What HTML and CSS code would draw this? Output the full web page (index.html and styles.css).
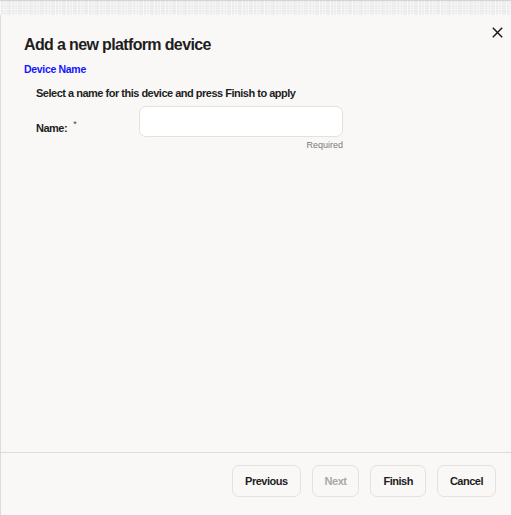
FILE: index.html
```html
<!DOCTYPE html>
<html lang="en">
<head>
<meta charset="utf-8">
<title>Add a new platform device</title>
<link rel="stylesheet" href="styles.css">
</head>
<body>
<div class="backdrop"></div>
<div class="dialog">
  <div class="dialog-body">
    <div class="header">
      <h1 class="title">Add a new platform device</h1>
      <button class="close" aria-label="Close">
        <svg width="11" height="11" viewBox="0 0 11 11"><path d="M0.8 0.8 L10.2 10.2 M10.2 0.8 L0.8 10.2" stroke="#1c1c1c" stroke-width="1.5" fill="none"/></svg>
      </button>
    </div>
    <div class="step">Device Name</div>
    <div class="section">
      <p class="instructions">Select a name for this device and press Finish to apply</p>
      <div class="form-row">
        <label class="label" for="name">Name:<span class="req">*</span></label>
        <div class="field">
          <input id="name" class="input" type="text">
          <div class="hint">Required</div>
        </div>
      </div>
    </div>
  </div>
  <div class="footer">
    <button class="btn">Previous</button>
    <button class="btn disabled">Next</button>
    <button class="btn">Finish</button>
    <button class="btn">Cancel</button>
  </div>
</div>
</body>
</html>
```
FILE: styles.css
```css
html, body {
  margin: 0;
  padding: 0;
  height: 515px;
  overflow: hidden;
}
body {
  background: #f9f8f7;
  font-family: "Liberation Sans", Arial, sans-serif;
  color: #1f1f1f;
}
.backdrop {
  height: 15px;
  background-color: #ebebeb;
  background-image:
    repeating-linear-gradient(90deg, rgba(255,255,255,0.6) 0 1px, transparent 1px 3px, rgba(255,255,255,0.3) 3px 5px, transparent 5px 6px, rgba(255,255,255,0.5) 6px 7px, transparent 7px 11px),
    repeating-linear-gradient(0deg, rgba(255,255,255,0.35) 0 1px, transparent 1px 2px, rgba(255,255,255,0.2) 2px 3px, transparent 3px 5px);
  border-top: 1px solid #d4d4d4;
  box-sizing: border-box;
}
.dialog {
  height: 500px;
  box-sizing: border-box;
  border-left: 1px solid #dcdcdc;
  background: #f9f8f7;
  display: flex;
  flex-direction: column;
}
.dialog-body {
  flex: 1;
  padding: 12px 8px 0 23px;
}
.header {
  display: flex;
  justify-content: space-between;
  align-items: flex-start;
}
.title {
  margin: 8px 0 0 0;
  font-size: 16px;
  line-height: 20px;
  font-weight: bold;
  letter-spacing: -0.04em;
  color: #1e1e1e;
}
.close {
  border: 0;
  padding: 0;
  background: transparent;
  width: 11px;
  height: 11px;
  display: block;
}
.close svg { display: block; }
.step {
  margin-top: 8px;
  font-size: 10.5px;
  line-height: 13px;
  font-weight: bold;
  letter-spacing: -0.03em;
  color: #1414ff;
}
.section {
  padding-left: 12px;
}
.instructions {
  margin: 10px 0 0 0;
  font-size: 11px;
  line-height: 14px;
  font-weight: bold;
  letter-spacing: -0.045em;
  color: #1e1e1e;
}
.form-row {
  margin-top: 6px;
  display: grid;
  grid-template-columns: 103px 204px;
}
.label {
  padding-top: 14.5px;
  font-size: 11px;
  line-height: 14px;
  font-weight: bold;
  letter-spacing: -0.045em;
  color: #1e1e1e;
  display: flex;
  align-items: flex-start;
}
.req {
  margin-left: 6px;
  margin-top: -1px;
  font-size: 9px;
  line-height: 9px;
  font-weight: normal;
  color: #444;
}
.field {
  display: flex;
  flex-direction: column;
}
.input {
  box-sizing: border-box;
  width: 204px;
  height: 31px;
  margin: 0;
  border: 1px solid #e3e1de;
  border-radius: 7px;
  background: #ffffff;
  outline: none;
}
.hint {
  margin-top: 3px;
  text-align: right;
  font-size: 9px;
  line-height: 11px;
  color: #7a7a7a;
}
.footer {
  height: 63px;
  box-sizing: border-box;
  border-top: 1px solid #dedcd9;
  padding: 12px 15px 0 0;
  display: flex;
  justify-content: flex-end;
  align-items: flex-start;
  gap: 11px;
}
.btn {
  height: 32px;
  padding: 0 12px;
  border: 1px solid #e4e2df;
  border-radius: 7px;
  background: #f9f8f7;
  font-family: "Liberation Sans", Arial, sans-serif;
  font-size: 11px;
  font-weight: bold;
  letter-spacing: -0.045em;
  color: #1e1e1e;
}
.btn.disabled {
  color: #a8a8a8;
}
```
